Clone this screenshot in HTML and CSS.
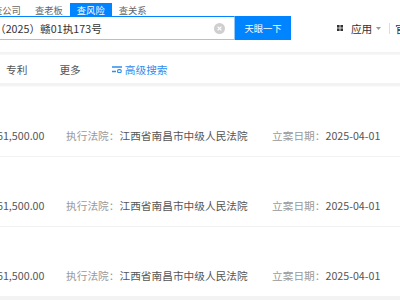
FILE: index.html
```html
<!DOCTYPE html>
<html lang="zh-CN">
<head>
<meta charset="utf-8">
<link rel="stylesheet" href="styles.css">
</head>
<body>
<div class="header">
  <div class="tabs">
    <span class="tab">查公司</span>
    <span class="tab">查老板</span>
    <span class="tab active">查风险</span>
    <span class="tab">查关系</span>
  </div>
  <div class="search-row">
    <div class="search-box">
      <span class="query">（2025）赣01执173号</span>
      <span class="clear"><svg width="11" height="11" viewBox="0 0 11 11"><circle cx="5.5" cy="5.5" r="5.5" fill="#cfcfcf"/><path d="M3.6 3.6l3.8 3.8M7.4 3.6l-3.8 3.8" stroke="#fff" stroke-width="1.2"/></svg></span>
    </div>
    <div class="btn">天眼一下</div>
    <div class="apps">
      <svg class="grid" width="6" height="6" viewBox="0 0 6 6"><rect x="0" y="0" width="2.6" height="2.6" fill="#333"/><rect x="3.4" y="0" width="2.6" height="2.6" fill="#333"/><rect x="0" y="3.4" width="2.6" height="2.6" fill="#333"/><rect x="3.4" y="3.4" width="2.6" height="2.6" fill="#333"/></svg>
      <span class="apps-text">应用</span>
      <svg class="caret" width="5" height="3" viewBox="0 0 5 3"><path d="M0 0h5L2.5 3z" fill="#999"/></svg>
      <span class="sep"></span>
      <span class="cut">官</span>
    </div>
  </div>
</div>
<div class="shadow"></div>
<div class="nav">
  <span class="nav-item first">专利</span>
  <span class="nav-item">更多</span>
  <span class="adv"><svg width="10" height="7" viewBox="0 0 10 7"><path d="M0 1h10M0 5.5h4" stroke="#2f8cf0" stroke-width="1.3"/><rect x="5.6" y="3.6" width="3.6" height="3" rx="1.2" fill="none" stroke="#2f8cf0" stroke-width="1.1"/></svg>高级搜索</span>
</div>
<div class="list">
  <div class="row">
    <span class="amt">61,500.00</span>
    <span class="court"><span class="label">执行法院：</span>江西省南昌市中级人民法院</span>
    <span class="date"><span class="label">立案日期：</span>2025-04-01</span>
  </div>
  <div class="row">
    <span class="amt">61,500.00</span>
    <span class="court"><span class="label">执行法院：</span>江西省南昌市中级人民法院</span>
    <span class="date"><span class="label">立案日期：</span>2025-04-01</span>
  </div>
  <div class="row">
    <span class="amt">61,500.00</span>
    <span class="court"><span class="label">执行法院：</span>江西省南昌市中级人民法院</span>
    <span class="date"><span class="label">立案日期：</span>2025-04-01</span>
  </div>
</div>
</body>
</html>
```
FILE: styles.css
```css
html, body {
  margin: 0;
  padding: 0;
  background: #fff;
}
body {
  width: 400px;
  height: 300px;
  overflow: hidden;
  font-family: "Noto Sans CJK SC", "Noto Sans", sans-serif;
  color: #333;
}
.header {
  height: 52px;
  background: #fff;
}
.tabs {
  display: flex;
  margin-left: -14px;
  padding-top: 3px;
  height: 14px;
}
.tab {
  padding: 0 7px;
  height: 14px;
  line-height: 14px;
  font-size: 9.3px;
  color: #666;
}
.tab.active {
  background: #0084ff;
  color: #fff;
}
.search-row {
  display: flex;
  align-items: stretch;
  height: 24px;
  margin-top: -1px;
}
.search-box {
  width: 235px;
  box-sizing: border-box;
  border: 1px solid #94c9f7;
  border-left: none;
  border-top-color: #0084ff;
  display: flex;
  align-items: center;
}
.query {
  margin-left: -5px;
  font-size: 10.7px;
  color: #333;
  flex: 1;
}
.clear {
  display: flex;
  margin-right: 9px;
}
.btn {
  width: 56px;
  background: #0084ff;
  color: #fff;
  font-size: 9.3px;
  display: flex;
  align-items: center;
  justify-content: center;
}
.apps {
  margin-left: auto;
  display: flex;
  align-items: center;
  margin-right: -6px;
}
.grid {
  margin-right: 8px;
}
.apps-text {
  font-size: 10.7px;
  color: #333;
}
.caret {
  margin-left: 4px;
}
.sep {
  width: 1px;
  height: 11px;
  background: #ddd;
  margin-left: 8px;
  margin-right: 5px;
}
.cut {
  font-size: 10.7px;
  color: #333;
}
.shadow {
  height: 3px;
  background: linear-gradient(#f2f2f2, #f7f7f7);
}
.nav {
  height: 28px;
  display: flex;
  align-items: center;
  font-size: 10.7px;
  color: #555;
  border-bottom: 3px solid #f3f3f3;
  box-sizing: content-box;
}
.nav-item.first {
  margin-left: 6px;
  margin-right: 32px;
}
.nav-item {
  margin-right: 31px;
}
.adv {
  display: flex;
  align-items: center;
  color: #2f8cf0;
}
.adv svg {
  margin-right: 3px;
  margin-top: 1px;
}
.list {
  border-top: 1px solid #fafafa;
}
.row {
  height: 69px;
  border-bottom: 1px solid #f2f2f2;
  display: flex;
  align-items: flex-start;
  padding-top: 0;
  box-sizing: content-box;
  font-size: 10.7px;
  line-height: 14px;
  color: #555;
}
.row > span {
  margin-top: 42px;
  white-space: nowrap;
}
.amt {
  width: 69px;
  margin-left: -3px;
  color: #555;
}
.court {
  width: 206px;
}
.label {
  color: #999;
}
.row:last-child {
  border-bottom: 4px solid #f3f3f3;
}
```
